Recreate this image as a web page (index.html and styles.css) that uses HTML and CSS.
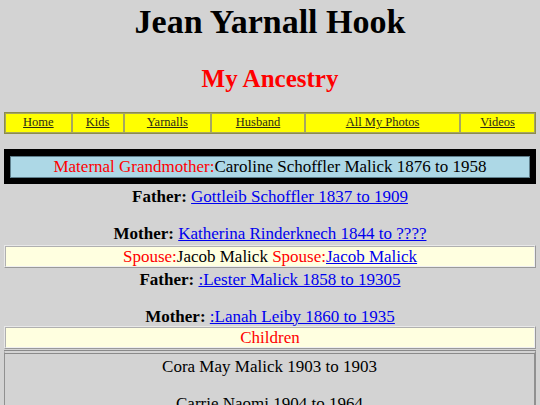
FILE: index.html
```html
<!DOCTYPE html>
<html>
<head>
<meta charset="utf-8">
<title>Jean Yarnall Hook</title>
<link rel="stylesheet" href="styles.css">
</head>
<body>
<h1 class="title">Jean Yarnall Hook</h1>
<h2 class="subtitle">My Ancestry</h2>
<nav class="nav">
  <a class="nav-cell" href="#">Home</a>
  <a class="nav-cell" href="#">Kids</a>
  <a class="nav-cell" href="#">Yarnalls</a>
  <a class="nav-cell" href="#">Husband</a>
  <a class="nav-cell" href="#">All My Photos</a>
  <a class="nav-cell" href="#">Videos</a>
</nav>
<div class="frame">
  <div class="frame-in"><span class="red">Maternal Grandmother:</span>Caroline Schoffler Malick 1876 to 1958</div>
</div>
<div class="parents first">
  <div class="line"><b>Father:</b> <a class="link" href="#">Gottleib Schoffler 1837 to 1909</a></div>
  <div class="line">&nbsp;</div>
  <div class="line"><b>Mother:</b> <a class="link" href="#">Katherina Rinderknech 1844 to ????</a></div>
</div>
<div class="box spouse">
  <div class="box-in"><span class="red">Spouse:</span>Jacob Malick <span class="red">Spouse:</span><a class="link" href="#">Jacob Malick</a></div>
</div>
<div class="parents second">
  <div class="line"><b>Father:</b> <a class="link" href="#">:Lester Malick 1858 to 19305</a></div>
  <div class="line">&nbsp;</div>
  <div class="line"><b>Mother:</b> <a class="link" href="#">:Lanah Leiby 1860 to 1935</a></div>
</div>
<div class="box kids-head">
  <div class="box-in red">Children</div>
</div>
<div class="kids-list">
  <div class="line">Cora May Malick 1903 to 1903</div>
  <div class="line">&nbsp;</div>
  <div class="line">Carrie Naomi 1904 to 1964</div>
</div>
</body>
</html>
```
FILE: styles.css
```css
html { background: #d3d3d3; }
body {
  margin: 4px;
  background: #d3d3d3;
  font-family: "Liberation Serif", "Times New Roman", serif;
  font-size: 17px;
  color: #000;
  text-align: center;
}
.title {
  margin: 0 0 25px;
  font-size: 34px;
  line-height: 36px;
  font-weight: bold;
}
.subtitle {
  margin: 0 0 19px;
  font-size: 25px;
  line-height: 28px;
  font-weight: bold;
  color: #ff0000;
}
.nav {
  display: grid;
  grid-template-columns: 67fr 52fr 88fr 94fr 156fr 75fr;
  border: 1px solid #8c8c4c;
  background: #ffff00;
}
.nav-cell {
  border: 1px solid #a6a660;
  padding: 1px 0 2px;
  font-size: 12.5px;
  line-height: 15px;
  color: #2b2b14;
  text-decoration: underline;
}
.frame {
  margin-top: 15px;
  background: #000;
  padding: 7px 6px 6px;
}
.frame-in {
  background: #add8e6;
  border: 1px solid #5f7f8c;
  padding: 1px 0;
  line-height: 18px;
}
.red { color: #ff0000; }
.link { color: #0000ee; text-decoration: underline; }
.line { line-height: 18.5px; }
.parents.first { margin-top: 4px; }
.parents.second { margin-top: 3px; }
.box {
  border: 1px solid;
  border-color: #e8e8e8 #9a9a9a #9a9a9a #e8e8e8;
  background: #ffffe0;
}
.box-in {
  border: 1px solid;
  border-color: #b0b0b0 #f0f0f0 #f0f0f0 #b0b0b0;
  line-height: 19px;
}
.spouse { margin-top: 1px; }
.kids-head { margin-top: 0; }
.kids-list {
  margin-top: 1px;
  border: 1px solid #909090;
  border-top: 4px double #8a8a8a;
  border-right-width: 2px;
  padding-top: 4px;
}
```
